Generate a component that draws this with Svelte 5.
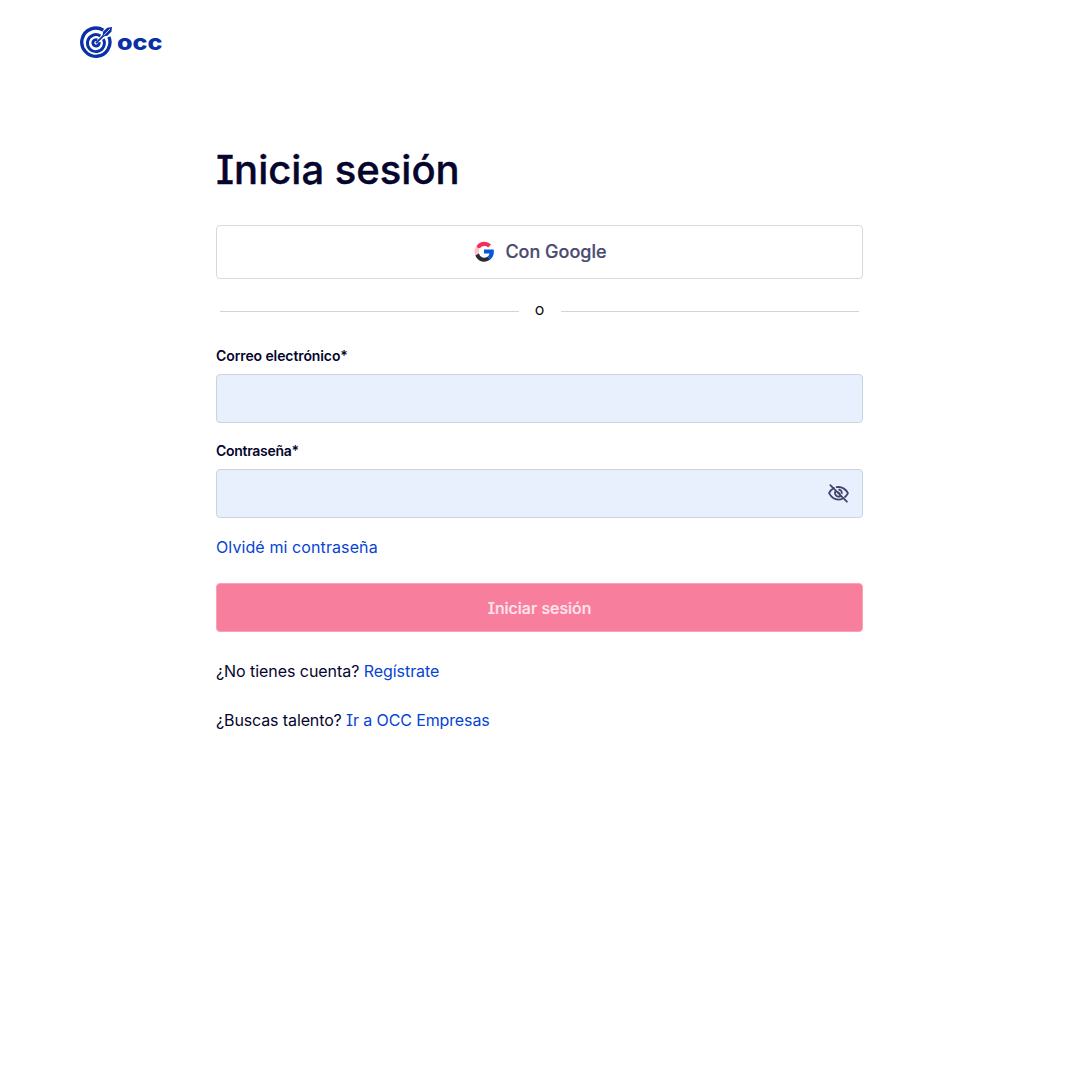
<script>
  let email = $state('');
  let password = $state('');
</script>

<header>
  <svg class="mark" viewBox="0 0 33 33" fill="none" stroke="#0a30a8">
    <path d="M23.3 4.2A14.1 14.1 0 1 0 28.9 10.8" stroke-width="3.3" />
    <path d="M20.4 9.9A8.5 8.5 0 1 0 23.4 13.1" stroke-width="2.9" />
    <path d="M17.3 13.9A3.2 3.2 0 1 0 19.2 16.3" stroke-width="2.9" />
    <path d="M16 17.2L25 8.2" stroke-width="1.7" />
    <path d="M23.2 5.6L27.3 1.7L32 1L31.4 5.7L27.4 9.7L22.4 10.6Z" fill="#0a30a8" stroke="none" />
    <path d="M23.8 9.3L30 3" stroke="#fff" stroke-width=".8" />
  </svg>
  <svg class="brand" viewBox="0 0 50 30">
    <text x="0" y="21.5" textLength="45.5" lengthAdjust="spacingAndGlyphs">occ</text>
  </svg>
</header>

<main>
  <h1>Inicia sesión</h1>

  <button class="google" type="button">
    <svg class="g-logo" viewBox="0 0 20 21">
      <path d="M3.1 4.2A9.4 9.4 0 0 1 17 3.5L14.2 6.4A5.8 5.8 0 0 0 6.1 7L2 7.2Z" fill="#f52d59" />
      <path d="M2.1 5.5L5.6 7.7Q4.1 10.5 5.5 13.6L2.1 15.8Q-1.2 10.7 2.1 5.5Z" fill="#ffc1ce" />
      <path d="M1.4 14.4L4.9 12.6C6.5 17 10.4 17.4 13.5 15.7L16.5 18.3C11.5 22.4 4.2 21.2 1.4 14.4Z" fill="#282d35" />
      <path d="M10 8.6H19.7C20.3 13 19 16.3 16.5 18.3L13.4 15.7Q15.1 14.6 15.5 12.6H10Z" fill="#0757d8" />
    </svg>
    <span>Con Google</span>
  </button>

  <div class="divider"><i></i><span>o</span><i></i></div>

  <form onsubmit={(e) => e.preventDefault()}>
    <label for="email"><span class="mail-label">Correo electrónico*</span></label>
    <input id="email" type="email" bind:value={email} />

    <label class="second" for="password"><span class="pass-label">Contraseña*</span></label>
    <div class="password">
      <input id="password" type="password" bind:value={password} />
      <svg class="eye" viewBox="0 0 20 18" fill="none" stroke="#42426b" stroke-width="1.7" stroke-linecap="round">
        <path d="M5.5 3.8Q2.7 5.4 1 8.7Q4.3 14.8 10 14.8Q12 14.8 13.7 14M8.2 2.9Q15.4 2 19 8.7Q18 10.8 16.2 12.3" />
        <path d="M7.3 6.6A3.4 3.4 0 0 0 11.7 11.5M10.6 5.4A3.4 3.4 0 0 1 13.2 8.6M2.2 1L18 16.8" />
        <path d="M9.8 7.9L11.2 9.3" />
      </svg>
    </div>

    <a class="forgot" href="#recuperar">Olvidé mi contraseña</a>
    <button class="submit" type="submit"><span>Iniciar sesión</span></button>
  </form>

  <p class="signup"><span>¿No tienes cuenta?</span> <a href="#registro">Regístrate</a></p>
  <p class="talent"><span>¿Buscas talento?</span> <a href="#empresas">Ir a OCC Empresas</a></p>
</main>

<style>
  :global(body) {
    background: #fff;
    color: #05052d;
    font-family: Inter, "Open Sans", sans-serif;
    font-feature-settings: "cv08";
  }
  header {
    display: flex;
    align-items: center;
    height: 85px;
    padding-left: 80px;
    box-sizing: border-box;
  }
  .mark { width: 33px; height: 33px; }
  .brand { width: 50px; height: 30px; margin: 0 0 0 4px; }
  .brand text { fill: #0a30a8; font: 800 22px Inter, sans-serif; }
  main { width: 647px; margin-left: 216px; }
  h1 {
    margin: 60px 0 0;
    height: 79.5px;
    font-size: 40px;
    line-height: 50px;
    font-weight: 500;
    -webkit-text-stroke: .4px currentColor;
    white-space: nowrap;
  }
  button, input { font: inherit; font-feature-settings: inherit; box-sizing: border-box; }
  button { display: flex; align-items: center; justify-content: center; width: 100%; padding: 0; }
  .google {
    height: 54px;
    gap: 11px;
    padding: 0 0 1px 2px;
    border: 1px solid #d9d9dd;
    border-radius: 4px;
    background: #fff;
    color: #4a4a70;
    font-size: 18px;
    font-weight: 500;
    -webkit-text-stroke: .2px currentColor;
  }
  .g-logo { width: 20px; height: 21px; }
  .divider {
    display: flex;
    align-items: center;
    height: 20px;
    margin: 20.5px 4px 0;
    font-size: 16px;
    line-height: 20px;
    color: #111;
  }
  .divider i { flex: 1; height: 1px; background: #d4d4d4; margin-top: 4px; }
  .divider span { width: 42px; text-align: center; }
  label {
    display: block;
    height: 27px;
    margin-top: 28px;
    font-size: 14px;
    line-height: 18px;
    font-weight: 600;
  }
  .mail-label { letter-spacing: -.1px; }
  .pass-label { letter-spacing: -.3px; }
  label.second { margin-top: 19px; }
  input {
    display: block;
    width: 100%;
    height: 49px;
    padding: 0 16px;
    border: 1px solid #ccd3df;
    border-radius: 4px;
    background: #e8f0fe;
    outline: none;
  }
  .password { position: relative; }
  .eye { position: absolute; right: 14px; top: 15px; width: 21px; height: 19px; }
  a { color: #0644d4; text-decoration: none; }
  .forgot { display: block; width: max-content; margin-top: 17px; font-size: 16px; line-height: 24px; letter-spacing: .1px; }
  .submit {
    height: 49px;
    margin-top: 24px;
    border: 1px solid #fba1b7;
    border-radius: 4px;
    background: #f87e9d;
    color: #ffe5ec;
    font-size: 16px;
    font-weight: 500;
    -webkit-text-stroke: .2px currentColor;
  }
  p { margin: 0; font-size: 16px; line-height: 24px; white-space: nowrap; }
  .signup { margin-top: 27px; letter-spacing: -.06px; }
  .talent { margin-top: 25px; letter-spacing: -.12px; }
</style>
